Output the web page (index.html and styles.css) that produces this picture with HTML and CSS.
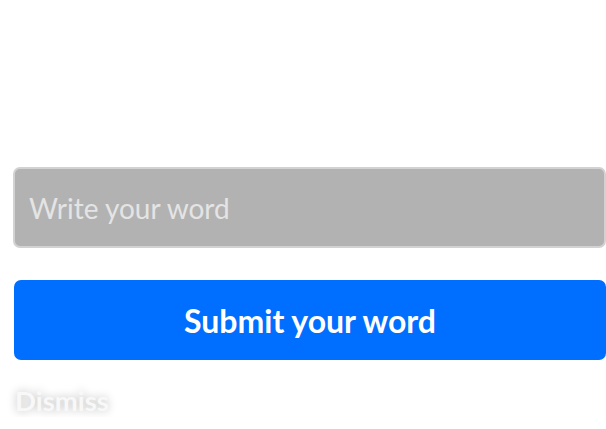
FILE: index.html
```html
<!DOCTYPE html>
<html>
<head>
<meta charset="utf-8">
<link rel="stylesheet" href="styles.css">
</head>
<body>
<main class="form">
  <input class="word-input" type="text" placeholder="Write your word">
  <button class="submit-btn" type="button">Submit your word</button>
  <div class="dismiss">Dismiss</div>
</main>
</body>
</html>
```
FILE: styles.css
```css
html, body {
  margin: 0;
  padding: 0;
  background: #ffffff;
}
body {
  font-family: Lato, "Open Sans", sans-serif;
}
.form {
  display: flex;
  flex-direction: column;
  padding: 167px 0 0 13px;
}
.word-input {
  box-sizing: border-box;
  height: 81px;
  width: 100%;
  margin: 0;
  border: 2px solid #d2d2d2;
  border-radius: 7px;
  background: #b2b2b2;
  font-family: Lato, sans-serif;
  font-size: 28px;
  padding: 0 14px;
  color: #ffffff;
  outline: none;
}
.word-input::placeholder {
  color: #e4e4e4;
}
.submit-btn {
  box-sizing: border-box;
  margin: 32px 0 0 1px;
  height: 80px;
  border: none;
  border-radius: 7px;
  background: #006efe;
  color: #ffffff;
  font-family: Lato, sans-serif;
  font-weight: 700;
  font-size: 32px;
  padding: 0;
}
.dismiss {
  margin: 25px 0 0 2px;
  font-family: Lato, sans-serif;
  font-weight: 700;
  font-size: 27.5px;
  color: #f8f8f8;
  text-shadow: 0 0 10px rgba(0,0,0,0.28);
  line-height: 32px;
}
```
